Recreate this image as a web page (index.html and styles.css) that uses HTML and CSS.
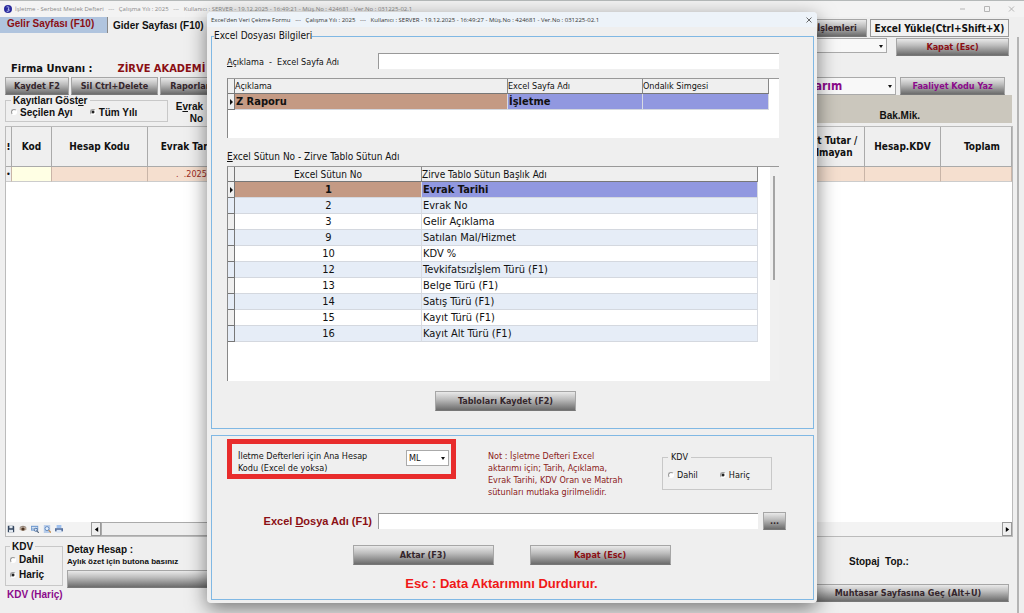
FILE: index.html
```html
<!DOCTYPE html>
<html lang="tr">

<head>
    <meta charset="UTF-8">
    <meta name="viewport" content="width=device-width, initial-scale=1.0">
    <title>İşletme - Serbest Meslek Defteri</title>
    <link rel="stylesheet" href="styles.css">
</head>

<body>
    <div class="window">
        <header class="titlebar">
            <svg class="app-icon" viewBox="0 0 18 18"><circle cx="9" cy="9" r="9" fill="#2a2a9c"/><path d="M6 4.500c3-1 6 0 5 2.500l-2 3 3 1-2 3-4 0" fill="none" stroke="#c9d4ff" stroke-width="2"/></svg>
            <span class="title-text">İşletme - Serbest Meslek Defteri   ---   Çalışma Yılı : 2025   ---   Kullanıcı : SERVER - 19.12.2025 - 16:49:21 - Müş.No : 424681 - Ver.No : 031225-02.1</span>
            <svg class="window-controls" viewBox="0 0 56 8"><path d="M1 4h5M25.500 1.500h5v5h-5zM50 1.500l5 5M55 1.500l-5 5" fill="none" stroke="#b5b5b5"/></svg>
        </header>

        <nav class="tabs">
            <a class="tab active" href="#gelir">Gelir Sayfası (F10)</a>
            <a class="tab" href="#gider">Gider Sayfası (F10)</a>
            <div class="tab-actions">
                <button class="btn btn-islem">İşlemleri</button>
                <button class="btn-plain">Excel Yükle(Ctrl+Shift+X)</button>
            </div>
        </nav>

        <main class="page">
            <div class="line line-top">
                <div class="select select-firm"><select aria-label="Firma"><option></option></select></div>
                <button class="btn red btn-close-page">Kapat (Esc)</button>
            </div>
            <div class="line line-firm">
                <span class="firm-label">Firma Unvanı :</span>
                <span class="firm-name">ZİRVE AKADEMİ</span>
            </div>
            <div class="line line-buttons">
                <button class="btn btn-kaydet">Kaydet F2</button>
                <button class="btn btn-sil">Sil Ctrl+Delete</button>
                <button class="btn btn-rapor">Raporlar</button>
                <div class="select select-aktarim"><select aria-label="Aktarım"><option>Aktarım</option></select></div>
                <button class="btn purple btn-faaliyet">Faaliyet Kodu Yaz</button>
            </div>
            <div class="line line-filter">
                <fieldset class="filter">
                    <legend>Kayıtları Göst<u>e</u>r</legend>
                    <label><input type="radio" name="kayit">Seçilen Ayı</label>
                    <label><input type="radio" name="kayit" checked>Tüm Yılı</label>
                </fieldset>
                <div class="evrak-no">E<u>v</u>rak<br>No</div>
                <div class="totals"><span>Bak.Mik.</span></div>
            </div>

            <div class="ledger">
                <table>
                    <thead>
                        <tr>
                            <th class="c-mark">⁝</th>
                            <th class="c-kod">Kod</th>
                            <th class="c-hesap">Hesap Kodu</th>
                            <th class="c-tarih">Evrak Tarihi</th>
                            <th></th>
                            <th class="c-tutar">Net Tutar /<br>Olmayan</th>
                            <th class="c-kdv">Hesap.KDV</th>
                            <th class="c-toplam">Toplam</th>
                        </tr>
                    </thead>
                    <tbody>
                        <tr>
                            <td class="mark">•</td>
                            <td class="kod"></td>
                            <td></td>
                            <td class="tarih">.&nbsp; .2025</td>
                            <td></td>
                            <td></td>
                            <td></td>
                            <td></td>
                        </tr>
                    </tbody>
                </table>
                <div class="ledger-foot">
                    <div class="tools">
                        <svg viewBox="0 0 10 10"><path d="M1 1h7l1 1v7H1z" fill="#34465e"/><path d="M3 1h4v3H3zM2.500 6h5v3h-5z" fill="#dfe6ee"/></svg>
                        <svg viewBox="0 0 10 10"><path d="M0 5q5-5 10 0q-5 5-10 0z" fill="#b5a392"/><circle cx="5" cy="5" r="2" fill="#4a3222"/><path d="M1 3q4-3 8 0" fill="none" stroke="#6b5342"/></svg>
                        <svg viewBox="0 0 10 10"><path d="M0 1h9v6H0z" fill="#6f9ad0"/><path d="M1 3h7M1 5h4" stroke="#fff"/><circle cx="6" cy="6" r="2" fill="#cfe0f5" stroke="#4d6f9e"/><path d="M7 7l3 3" stroke="#5a6b80" stroke-width="1.500"/></svg>
                        <svg viewBox="0 0 10 10"><path d="M1 0h8v10H1z" fill="#b8cdea"/><circle cx="5" cy="4.500" r="2.500" fill="#e5f0fc" stroke="#4b78b8"/><path d="M7 6.500l3 3" stroke="#c58a4a" stroke-width="1.500"/></svg>
                        <svg viewBox="0 0 10 10"><path d="M2 0h6v4H2z" fill="#9fc0ee"/><path d="M0 4h10v4H0z" fill="#57719f"/><path d="M2 6h6v4H2z" fill="#dce8f8"/></svg>
                    </div>
                    <div class="hscroll">
                        <button aria-label="Sola kaydır"><svg viewBox="0 0 6 6"><path d="M5 0v6L1 3z"/></svg></button>
                        <span class="hscroll-thumb"></span>
                        <button aria-label="Sağa kaydır"><svg viewBox="0 0 6 6"><path d="M1 0v6l4-3z"/></svg></button>
                    </div>
                </div>
            </div>

            <footer class="bottom">
                <div class="bottom-kdv">
                    <fieldset>
                        <legend>KDV</legend>
                        <label><input type="radio" name="kdv">Dahil</label>
                        <label><input type="radio" name="kdv" checked>Hariç</label>
                    </fieldset>
                    <span class="kdv-state">KDV (Hariç)</span>
                </div>
                <div class="detay">
                    <strong>Detay Hesap :</strong>
                    <small>Aylık özet için butona basınız</small>
                    <button class="btn btn-detay" aria-label="Aylık özet"></button>
                </div>
                <div class="stopaj">
                    <span>Stopaj&nbsp; Top.:</span>
                    <button class="btn btn-muhtasar">Muhtasar Sayfasına Geç (Alt+U)</button>
                </div>
            </footer>
        </main>
    </div>

    <div class="dialog" role="dialog" aria-label="Excel'den Veri Çekme Formu">
        <header class="dialog-title">
            <span class="title-text">Excel'den Veri Çekme Formu   ---   Çalışma Yılı : 2025   ---   Kullanıcı : SERVER - 19.12.2025 - 16:49:27 - Müş.No : 424681 - Ver.No : 031225-02.1</span>
            <button class="dialog-close" aria-label="Kapat"><svg viewBox="0 0 6 6"><path d="M0.500 0.500l5 5M5.500 0.500l-5 5" stroke="#444" stroke-width="0.800"/></svg></button>
        </header>

        <fieldset class="group group-tables">
            <legend>Excel Dosyası Bilgileri</legend>
            <div class="name-row">
                <label for="aciklama"><span><u>A</u>çıklama&nbsp; -&nbsp; Excel Sayfa Adı</span></label>
                <input class="text" type="text" id="aciklama">
            </div>

            <div class="grid grid-pages">
                <table>
                    <thead>
                        <tr><th class="g-mark"></th><th>Açıklama</th><th class="g-sayfa">Excel Sayfa Adı</th><th class="g-simge">Ondalık Simgesi</th></tr>
                    </thead>
                    <tbody>
                        <tr class="selected"><td class="g-mark"></td><td class="key">Z Raporu</td><td>İşletme</td><td></td></tr>
                    </tbody>
                </table>
            </div>

            <p class="grid-label"><u>E</u>xcel Sütun No - Zirve Tablo Sütun Adı</p>

            <div class="grid grid-columns">
                <table>
                    <thead>
                        <tr><th class="g-mark"></th><th class="g-no">Excel Sütun No</th><th>Zirve Tablo Sütun Başlık Adı</th></tr>
                    </thead>
                    <tbody>
                        <tr class="selected"><td class="g-mark"></td><td class="key">1</td><td>Evrak Tarihi</td></tr>
                        <tr><td class="g-mark"></td><td>2</td><td>Evrak No</td></tr>
                        <tr><td class="g-mark"></td><td>3</td><td>Gelir Açıklama</td></tr>
                        <tr><td class="g-mark"></td><td>9</td><td>Satılan Mal/Hizmet</td></tr>
                        <tr><td class="g-mark"></td><td>10</td><td>KDV %</td></tr>
                        <tr><td class="g-mark"></td><td>12</td><td>Tevkifatsızİşlem Türü (F1)</td></tr>
                        <tr><td class="g-mark"></td><td>13</td><td>Belge Türü (F1)</td></tr>
                        <tr><td class="g-mark"></td><td>14</td><td>Satış Türü (F1)</td></tr>
                        <tr><td class="g-mark"></td><td>15</td><td>Kayıt Türü (F1)</td></tr>
                        <tr><td class="g-mark"></td><td>16</td><td>Kayıt Alt Türü (F1)</td></tr>
                    </tbody>
                </table>
                <div class="vscroll"><span></span></div>
            </div>

            <button class="btn btn-tablo">Tabloları Kaydet (F2)</button>
        </fieldset>

        <section class="group group-import">
            <div class="options">
                <div class="highlight">
                    <label for="hesap">İletme Defterleri için Ana Hesap<br>Kodu (Excel de yoksa)</label>
                    <div class="select select-ml"><select id="hesap"><option>ML</option></select></div>
                </div>
                <p class="note">Not : İşletme Defteri Excel<br>aktarımı için; Tarih, Açıklama,<br>Evrak Tarihi, KDV Oran ve Matrah<br>sütunları mutlaka girilmelidir.</p>
                <fieldset class="kdv">
                    <legend>KDV</legend>
                    <label><input type="radio" name="dkdv">Dahil</label>
                    <label><input type="radio" name="dkdv" checked>Hariç</label>
                </fieldset>
            </div>
            <div class="file-row">
                <label for="dosya"><span>Excel <u>D</u>osya Adı (F1)</span></label>
                <input class="text" type="text" id="dosya">
                <button class="btn btn-browse">...</button>
            </div>
            <div class="action-row">
                <button class="btn">Aktar (F3)</button>
                <button class="btn red">Kapat (Esc)</button>
            </div>
            <p class="esc">Esc : Data Aktarımını Durdurur.</p>
        </section>
    </div>
</body>

</html>
```
FILE: styles.css
```css
* {
    box-sizing: border-box;
}

body {
    margin: 0;
    background-color: #efefef;
    color: #111;
    font-family: "DejaVu Sans Condensed", "DejaVu Sans", sans-serif;
    font-size: 9px;
    overflow: hidden;
}

p,
fieldset,
legend {
    margin: 0;
    padding: 0;
}

fieldset {
    min-width: 0;
    border: 1px solid #c8c8c8;
}

table {
    width: 100%;
    border-collapse: separate;
    border-spacing: 0;
    table-layout: fixed;
}

th,
td {
    padding: 0;
    overflow: hidden;
    white-space: nowrap;
}

label {
    display: flex;
    align-items: center;
}

button,
input,
select {
    margin: 0;
    padding: 0;
    font: inherit;
    color: inherit;
}

/* Buttons */
.btn {
    flex: none;
    height: 18px;
    border: 1px solid #a6a6a6;
    border-bottom-color: #777;
    background: linear-gradient(#e9e9e9, #bdbdbd 40%, #6c6c6c);
    color: #35262c;
    font-weight: bold;
    font-size: 9px;
    line-height: 14px;
    white-space: nowrap;
}

.btn.red {
    color: #8b0f14;
}

.btn.purple {
    color: #8b0a8b;
}

.btn-plain {
    width: 139px;
    height: 18px;
    border: 1px solid #999;
    background-color: #f2f2f2;
    font-weight: bold;
    font-size: 10px;
    white-space: nowrap;
}

/* Inputs */
.text {
    height: 16px;
    border: 0;
    border-top: 1px solid #999;
    border-left: 1px solid #999;
    border-radius: 0;
    background-color: #fff;
}

input[type="radio"] {
    appearance: none;
    width: 6px;
    height: 6px;
    margin-right: 3px;
    border: 1px solid;
    border-color: #999 #fff #fff #999;
    border-radius: 50%;
    background-color: #fff;
}

input[type="radio"]:checked {
    background: radial-gradient(circle, #222 1px, #fff 2px);
}

.select {
    position: relative;
    flex: none;
}

.select select {
    width: 100%;
    height: 100%;
    padding-left: 2px;
    appearance: none;
    border: 1px solid #aaa;
    border-radius: 0;
    background-color: #f8f8f8;
}

.select::after {
    content: "";
    position: absolute;
    top: 45%;
    right: 4px;
    border: 2px solid transparent;
    border-top: 3px solid #111;
    border-bottom: 0;
}

/* Main window */
.window {
    display: flex;
    flex-direction: column;
    height: 100vh;
    border-top: 1px solid #b5b9b9;
}

.titlebar {
    display: flex;
    align-items: center;
    height: 16px;
    padding: 0 9px 0 4px;
    background-color: #f3f3f3;
    color: #8a8a8a;
}

.title-text {
    flex: 1;
    font-family: "Open Sans", sans-serif;
    font-size: 6px;
    line-height: 10px;
    white-space: pre;
}

.app-icon {
    width: 8px;
    height: 8px;
    margin-right: 3px;
}

.window-controls {
    width: 56px;
    height: 8px;
}

.tabs {
    display: flex;
    height: 20px;
    padding-right: 15px;
}

.tab {
    height: 16px;
    padding: 0 5px;
    color: #111;
    font-family: "Liberation Sans", Arial, sans-serif;
    font-weight: bold;
    font-size: 10px;
    line-height: 18px;
    text-decoration: none;
    white-space: nowrap;
}

.tab.active {
    width: 108px;
    padding: 0 7px;
    border-right: 1px solid #888;
    background-color: #b0c4de;
    color: #8b0f14;
    line-height: 14px;
}

.tab-actions {
    display: flex;
    gap: 3px;
    margin-left: auto;
    padding-top: 2px;
}

.btn-islem {
    width: 60px;
}

.page {
    flex: 1;
    display: flex;
    flex-direction: column;
    margin-right: 5px;
    padding: 1px 4px 0 5px;
    border-right: 2px solid #b4b4b4;
}

.line {
    display: flex;
}

.line-top {
    justify-content: flex-end;
    gap: 9px;
    height: 22px;
    padding-right: 4px;
}

.select-firm {
    width: 150px;
    height: 15px;
}

.btn-close-page {
    width: 113px;
}

.line-firm {
    align-items: center;
    gap: 25px;
    height: 17px;
    padding-left: 6px;
    font-weight: bold;
    font-size: 11px;
}

.firm-name {
    color: #8b0f14;
}

.line-buttons {
    gap: 2px;
    height: 18px;
    padding-right: 8px;
}

.btn-kaydet {
    width: 64px;
}

.btn-sil {
    width: 87px;
}

.btn-rapor {
    width: 60px;
}

.select-aktarim {
    width: 105px;
    height: 18px;
    margin-left: auto;
    color: #8b0a8b;
    font-weight: bold;
    font-size: 12px;
}

.btn-faaliyet {
    width: 105px;
    margin-left: 2px;
}

.line-filter {
    height: 31px;
    padding-right: 1px;
    font-family: "Liberation Sans", Arial, sans-serif;
    font-weight: bold;
    font-size: 10px;
}

.filter {
    display: flex;
    gap: 17px;
    width: 163px;
    height: 27px;
    padding-left: 5px;
}

.filter legend {
    padding: 0 2px;
    line-height: 11px;
}

.filter label {
    height: 12px;
}

.evrak-no {
    width: 35px;
    padding-top: 6px;
    line-height: 12px;
    text-align: right;
}

.totals {
    display: flex;
    flex: 1;
    align-items: flex-end;
    justify-content: flex-end;
    height: 28px;
    margin-left: 300px;
    padding: 0 92px 2px 0;
    background-color: #cbc7bd;
}

/* Ledger table */
.ledger {
    display: flex;
    flex: 1;
    flex-direction: column;
    border: 1px solid #bbb;
    background-color: #fff;
}

.ledger th {
    height: 40px;
    border-right: 1px solid #aaa;
    border-bottom: 1px solid #aaa;
    background-color: #efefef;
    font-size: 10px;
    line-height: 12px;
}

.ledger td {
    height: 15px;
    border-right: 1px solid #c9b5a8;
    border-bottom: 1px solid #ccc;
    background-color: #f5dfcf;
    font-size: 9px;
}

.ledger .mark {
    background-color: #efefef;
}

.ledger .kod {
    background-color: #ffffe4;
}

.ledger .tarih {
    padding-left: 28px;
    color: #9c2a20;
}

.c-mark {
    width: 6px;
}

.c-kod {
    width: 40px;
}

.c-hesap {
    width: 96px;
}

.c-tarih {
    width: 86px;
}

.c-tutar {
    width: 68px;
}

.c-kdv {
    width: 76px;
}

.c-toplam {
    width: 71px;
}

.ledger .c-toplam {
    padding-left: 12px;
}

.ledger-foot {
    display: flex;
    height: 14px;
    margin-top: auto;
    background-color: #f3f3f3;
}

.tools {
    display: flex;
    align-items: center;
    gap: 4px;
    width: 85px;
    padding-left: 1px;
}

.tools svg {
    width: 8px;
    height: 8px;
}

.hscroll {
    display: flex;
    flex: 1;
}

.hscroll button {
    display: flex;
    align-items: center;
    justify-content: center;
    width: 10px;
    border: 1px solid #999;
    background-color: #efefef;
}

.hscroll svg {
    width: 5px;
    height: 5px;
}

.hscroll-thumb {
    width: 300px;
    margin-right: auto;
    border: 1px solid #aaa;
    background-color: #efefef;
}

/* Bottom area */
.bottom {
    display: flex;
    height: 76px;
    padding: 4px 4px 0 0;
    font-family: "Liberation Sans", Arial, sans-serif;
    font-weight: bold;
    font-size: 10px;
}

.bottom-kdv {
    width: 58px;
}

.bottom-kdv fieldset {
    height: 45px;
    padding-left: 4px;
}

.bottom-kdv legend {
    padding: 0 2px;
    line-height: 11px;
}

.bottom-kdv label {
    height: 15px;
}

.kdv-state {
    display: block;
    padding: 3px 2px;
    color: #8b0a8b;
    white-space: nowrap;
}

.detay {
    display: flex;
    flex-direction: column;
    padding: 3px 0 0 4px;
}

.detay strong {
    font-size: 10px;
    line-height: 12px;
}

.detay small {
    font-size: 8px;
    line-height: 11px;
}

.btn-detay {
    width: 180px;
    margin-top: 3px;
}

.stopaj {
    display: flex;
    flex-direction: column;
    justify-content: space-between;
    width: 202px;
    height: 61px;
    margin-left: auto;
    padding-top: 15px;
}

.stopaj span {
    padding-left: 42px;
}

.btn-muhtasar {
    font-family: "DejaVu Sans Condensed", "DejaVu Sans", sans-serif;
}

/* Import dialog */
.dialog {
    position: absolute;
    inset: 12px 207px auto;
    padding: 0 3px 3px 4px;
    border-radius: 4px;
    background-color: #efefef;
    box-shadow: 0 6px 20px rgba(0, 0, 0, 0.5);
}

.dialog-title {
    display: flex;
    align-items: center;
    height: 15px;
    margin: 0 -3px 3px -4px;
    padding: 0 5px 0 4px;
    border-radius: 4px 4px 0 0;
    background-color: #edf3f9;
    color: #333;
}

.dialog-close {
    display: flex;
    border: 0;
    background: none;
}

.dialog-close svg {
    width: 6px;
    height: 6px;
}

.group {
    border: 1px solid #80b8e4;
}

.group-tables {
    height: 399px;
    padding: 0 34px 0 15px;
}

.group-tables legend {
    margin-left: -13px;
    font-size: 10px;
    line-height: 12px;
}

.name-row {
    display: flex;
    align-items: center;
    margin-top: 11px;
}

.name-row label {
    width: 151px;
    padding-top: 2px;
}

.name-row .text {
    flex: 1;
}

/* Grids */
.grid {
    display: flex;
    align-items: flex-start;
    border-top: 1px solid #999;
    border-left: 1px solid #888;
    background-color: #fff;
}

.grid th {
    height: 15px;
    border-right: 1px solid #888;
    border-bottom: 1px solid #777;
    background-color: #efefef;
    font-weight: normal;
    text-align: left;
}

.grid td {
    height: 16px;
    padding-left: 1px;
    border-right: 1px solid #d8dbe2;
    border-bottom: 1px solid #d4d8df;
    font-size: 11px;
    line-height: 15px;
}

.grid tr:nth-child(even) td {
    background-color: #e6edf7;
}

.grid tr .g-mark {
    width: 7px;
    padding: 0;
    border-right: 1px solid #777;
    border-bottom: 1px solid #777;
    background-color: #efefef;
}

.grid .selected td {
    background-color: #9198e0;
    font-weight: bold;
}

.grid .selected .key {
    background-color: #c49a84;
}

.grid .selected .g-mark {
    background-color: #efefef;
}

.selected .g-mark::before {
    content: "";
    display: block;
    width: 0;
    margin-left: 2px;
    border: 3px solid transparent;
    border-left: 3px solid #111;
    border-right: 0;
}

.grid-pages {
    height: 60px;
    margin-top: 9px;
    padding-right: 10px;
}

.g-sayfa {
    width: 135px;
}

.g-simge {
    width: 126px;
}

.grid-label {
    margin-top: 12px;
    font-size: 10px;
    line-height: 13px;
}

.grid-columns {
    height: 215px;
    margin-top: 3px;
}

.grid-columns th {
    font-size: 10px;
}

.g-no {
    width: 187px;
}

.grid-columns .g-no,
.grid-columns td:nth-child(2) {
    text-align: center;
}

.vscroll {
    flex: none;
    width: 9px;
    height: 100%;
    margin-left: 12px;
    padding: 9px 3px 0;
    background-color: #f0f0f0;
}

.vscroll span {
    display: block;
    width: 2px;
    height: 104px;
    background-color: #a5a5a5;
}

.btn-tablo {
    display: block;
    width: 141px;
    height: 20px;
    margin: 10px auto 0 208px;
}

/* Import options */
.group-import {
    height: 165px;
    margin-top: 6px;
    padding: 3px 27px 0 15px;
}

.options {
    display: flex;
    height: 73px;
}

.highlight {
    display: flex;
    justify-content: space-between;
    width: 229px;
    height: 40px;
    padding: 6px 2px 0 6px;
    border: 5px solid #e82c2c;
}

.highlight label {
    display: block;
    line-height: 12px;
}

.select-ml {
    width: 43px;
    height: 16px;
}

.select-ml select {
    background-color: #fff;
}

.note {
    margin-left: 32px;
    padding-top: 11px;
    color: #8b1a1a;
    line-height: 12px;
    white-space: nowrap;
}

.kdv {
    display: flex;
    gap: 22px;
    width: 110px;
    height: 38px;
    margin: 13px 14px 0 auto;
    padding: 6px 0 0 5px;
}

.kdv legend {
    padding: 0 3px;
    line-height: 11px;
}

.kdv label {
    height: 12px;
}

.file-row {
    display: flex;
    align-items: center;
}

.file-row label {
    justify-content: flex-end;
    width: 145px;
    margin-right: 6px;
    color: #8b0f14;
    font-family: "Liberation Sans", Arial, sans-serif;
    font-weight: bold;
    font-size: 11px;
}

.file-row .text {
    flex: 1;
}

.btn-browse {
    width: 23px;
    margin-left: 5px;
}

.action-row {
    display: flex;
    justify-content: center;
    gap: 36px;
    margin-top: 15px;
    padding-left: 10px;
}

.action-row .btn {
    width: 141px;
    height: 20px;
}

.esc {
    margin-top: 11px;
    padding-right: 10px;
    color: #f01818;
    font-family: "Liberation Sans", Arial, sans-serif;
    font-weight: bold;
    font-size: 13px;
    line-height: 15px;
    text-align: center;
}
```
